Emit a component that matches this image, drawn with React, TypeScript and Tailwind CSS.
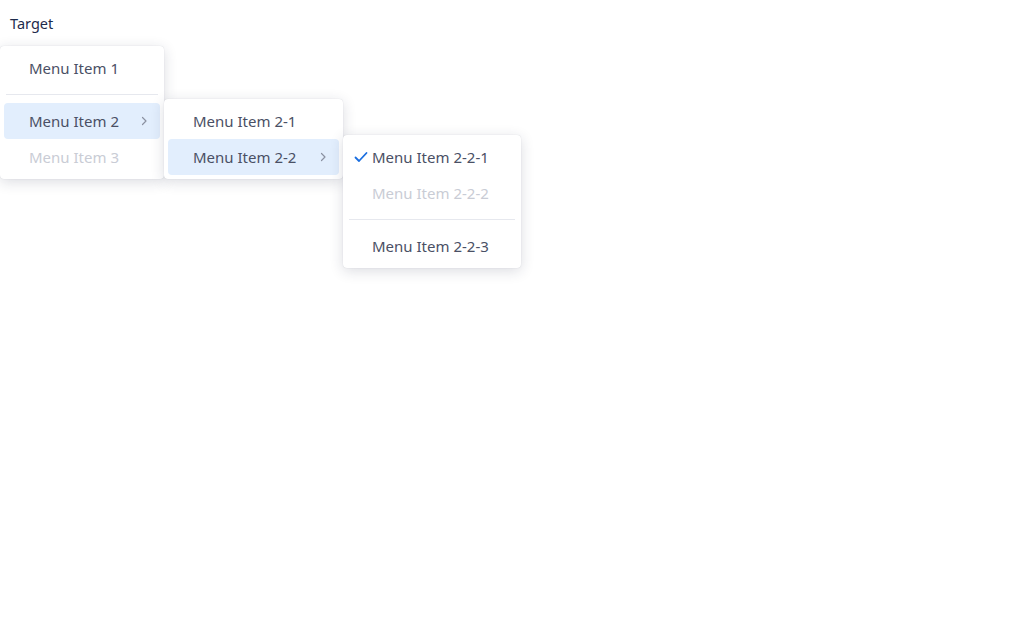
import { ReactNode } from "react";

const font = { fontFamily: '"Noto Sans", "Segoe UI", sans-serif' };

function Chevron() {
  return (
    <svg width="12" height="12" viewBox="0 0 12 12" className="ml-auto mr-[10px] text-[#8b91a1]">
      <path d="M4.5 2.5 8 6l-3.5 3.5" fill="none" stroke="currentColor" strokeWidth="1.2" strokeLinecap="round" strokeLinejoin="round" />
    </svg>
  );
}

function Check() {
  return (
    <svg width="14" height="14" viewBox="0 0 14 14" className="absolute left-[7px] text-[#1a6ee0]">
      <path d="M1.5 7.5 5 11l7.5-8" fill="none" stroke="currentColor" strokeWidth="1.8" strokeLinecap="round" strokeLinejoin="round" />
    </svg>
  );
}

function Item({
  label,
  active,
  disabled,
  checked,
  hasSub,
  children,
}: {
  label: string;
  active?: boolean;
  disabled?: boolean;
  checked?: boolean;
  hasSub?: boolean;
  children?: ReactNode;
}) {
  return (
    <div
      className={`relative flex h-9 items-center rounded pl-[25px] text-[15px] ${
        active ? "bg-[#e2eefd]" : ""
      } ${disabled ? "text-[#c9ccd5]" : "text-[#4a5065]"}`}
    >
      {checked && <Check />}
      <span>{label}</span>
      {hasSub && <Chevron />}
      {children && <div className="absolute left-[calc(100%+4px)] top-[-4px] z-10">{children}</div>}
    </div>
  );
}

function Separator() {
  return <div className="mx-[2px] my-2 h-px bg-[#e6e8ee]" />;
}

function Menu({ width, children }: { width: string; children: ReactNode }) {
  return (
    <div
      className={`${width} rounded bg-white p-1 shadow-[0_3px_14px_rgba(30,40,70,0.16),0_0_1px_rgba(30,40,70,0.2)]`}
    >
      {children}
    </div>
  );
}

export default function App() {
  return (
    <div className="min-h-screen bg-white" style={font}>
      <div className="px-[10px] pt-[13px] text-[14.5px] leading-5 text-[#1d2b4c]">Target</div>
      <div className="mt-[13px]">
        <Menu width="w-[164px]">
          <Item label="Menu Item 1" />
          <Separator />
          <Item label="Menu Item 2" active hasSub>
            <Menu width="w-[179px]">
              <Item label="Menu Item 2-1" />
              <Item label="Menu Item 2-2" active hasSub>
                <Menu width="w-[178px]">
                  <Item label="Menu Item 2-2-1" checked />
                  <Item label="Menu Item 2-2-2" disabled />
                  <Separator />
                  <Item label="Menu Item 2-2-3" />
                </Menu>
              </Item>
            </Menu>
          </Item>
          <Item label="Menu Item 3" disabled />
        </Menu>
      </div>
    </div>
  );
}
